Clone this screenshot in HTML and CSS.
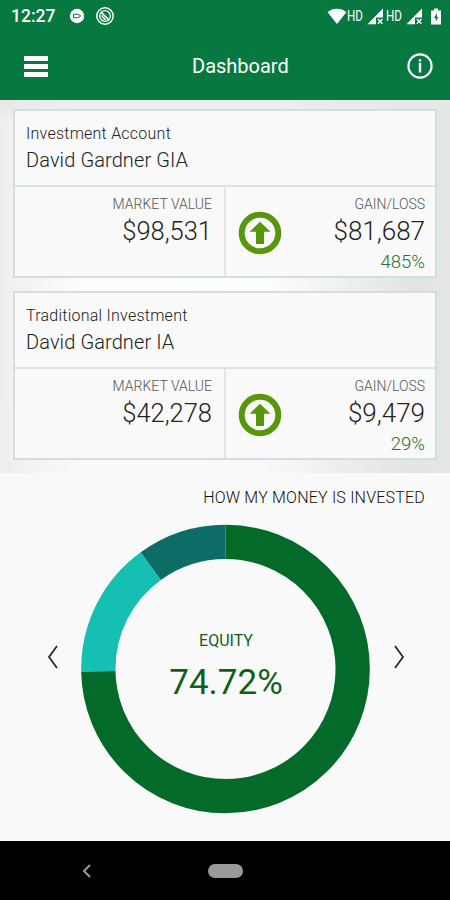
FILE: index.html
```html
<!DOCTYPE html>
<html lang="en">
<head>
  <meta charset="UTF-8">
  <title>Dashboard</title>
  <link rel="stylesheet" href="styles.css">
</head>
<body>
  <header class="header">
    <!-- Phone status bar -->
    <div class="status-bar">
      <span class="clock">12:27</span>
      <svg class="notif-video" width="16" height="16" viewBox="0 0 16 16">
        <circle cx="8" cy="8" r="7.2" fill="#fff"/>
        <path d="M4.5 6.3h4.5l2.8 1.7L9 9.7H4.5z" fill="none" stroke="#07783f" stroke-width="1"/>
      </svg>
      <svg class="notif-call" width="20" height="20" viewBox="0 0 20 20">
        <circle cx="10" cy="10" r="8.2" fill="none" stroke="#fff" stroke-width="1.5"/>
        <circle cx="10" cy="10" r="5.3" fill="none" stroke="#fff" stroke-width="1.3"/>
        <path d="M6.5 6.5l7 7M6.5 9.5l4 4.5" fill="none" stroke="#fff" stroke-width="1.7"/>
      </svg>
      <svg class="wifi" width="20" height="17" viewBox="0 0 20 17">
        <path d="M.6 4.2C5.5-.3 14.5-.3 19.4 4.2L10 16z" fill="#fff"/>
      </svg>
      <span class="hd">HD</span>
      <svg class="signal" width="17" height="17" viewBox="0 0 17 17">
        <path d="M16 .5v9H9v6.7H.5z" fill="#fff"/>
        <path d="M10.8 11l4.6 4.8M15.4 11l-4.6 4.8" stroke="#fff" stroke-width="1.3"/>
      </svg>
      <span class="hd hd-second">HD</span>
      <svg class="signal" width="17" height="17" viewBox="0 0 17 17">
        <path d="M16 .5v9H9v6.7H.5z" fill="#fff"/>
        <path d="M10.8 11l4.6 4.8M15.4 11l-4.6 4.8" stroke="#fff" stroke-width="1.3"/>
      </svg>
      <svg class="battery" width="12" height="17" viewBox="0 0 12 17">
        <path d="M4 .5h4v2h3v14H1v-14h3z" fill="#fff"/>
        <path d="M6.8 5L4 10h1.7v3.8L8.3 9H6.8z" fill="#07783f"/>
      </svg>
    </div>
    <div class="app-bar">
      <div class="menu"><span></span><span></span><span></span></div>
      <h1>Dashboard</h1>
      <svg class="info" width="28" height="28" viewBox="0 0 28 28">
        <circle cx="14" cy="14" r="11.6" fill="none" stroke="#fff" stroke-width="2.1"/>
        <path d="M14 7.3v2.2M14 10.7v9.8" stroke="#fff" stroke-width="2.4"/>
      </svg>
    </div>
  </header>

  <!-- Accounts -->
  <section class="accounts">
    <div class="card">
      <div class="card-head">
        <div class="type">Investment Account</div>
        <div class="name">David Gardner GIA</div>
      </div>
      <div class="card-body">
        <div class="market">
          <div class="label">MARKET VALUE</div>
          <div class="value">$98,531</div>
        </div>
        <div class="gain">
          <svg class="arrow" width="44" height="44" viewBox="0 0 44 44">
            <circle cx="22" cy="22" r="18.3" fill="none" stroke="#58970c" stroke-width="6"/>
            <path d="M22 10.8L32.5 20.8H26V33h-8V20.8h-6.5z" fill="#58970c"/>
          </svg>
          <div class="gain-text">
            <div class="label">GAIN/LOSS</div>
            <div class="value">$81,687</div>
            <div class="percent">485%</div>
          </div>
        </div>
      </div>
    </div>

    <div class="card">
      <div class="card-head">
        <div class="type">Traditional Investment</div>
        <div class="name">David Gardner IA</div>
      </div>
      <div class="card-body">
        <div class="market">
          <div class="label">MARKET VALUE</div>
          <div class="value">$42,278</div>
        </div>
        <div class="gain">
          <svg class="arrow" width="44" height="44" viewBox="0 0 44 44">
            <circle cx="22" cy="22" r="18.3" fill="none" stroke="#58970c" stroke-width="6"/>
            <path d="M22 10.8L32.5 20.8H26V33h-8V20.8h-6.5z" fill="#58970c"/>
          </svg>
          <div class="gain-text">
            <div class="label">GAIN/LOSS</div>
            <div class="value">$9,479</div>
            <div class="percent">29%</div>
          </div>
        </div>
      </div>
    </div>
  </section>

  <!-- Allocation chart -->
  <section class="invested">
    <h2>HOW MY MONEY IS INVESTED</h2>
    <div class="carousel">
      <svg class="chevron" width="14" height="26" viewBox="0 0 14 26">
        <path d="M11 2L3 13l8 11" fill="none" stroke="#222" stroke-width="1.7"/>
      </svg>
      <div class="chart">
        <svg width="290" height="290" viewBox="0 0 290 290">
          <g fill="none" stroke-width="34.3" transform="rotate(-90 144.5 145)">
            <circle cx="144.5" cy="145" r="127.2" pathLength="100" stroke="#046a2a" stroke-dasharray="74.72 100"/>
            <circle cx="144.5" cy="145" r="127.2" pathLength="100" stroke="#15bfb1" stroke-dasharray="15.28 100" stroke-dashoffset="-74.72"/>
            <circle cx="144.5" cy="145" r="127.2" pathLength="100" stroke="#0d6d66" stroke-dasharray="10 100" stroke-dashoffset="-90"/>
          </g>
        </svg>
        <div class="chart-label">
          <div class="asset">EQUITY</div>
          <div class="share">74.72%</div>
        </div>
      </div>
      <svg class="chevron" width="14" height="26" viewBox="0 0 14 26">
        <path d="M3 2l8 11-8 11" fill="none" stroke="#222" stroke-width="1.7"/>
      </svg>
    </div>
  </section>

  <!-- System navigation -->
  <footer class="nav-bar">
    <svg class="back" width="10" height="16" viewBox="0 0 10 16">
      <path d="M8 2L2 8l6 6" fill="none" stroke="#999" stroke-width="2"/>
    </svg>
    <span class="home"></span>
  </footer>
</body>
</html>
```
FILE: styles.css
```css
* {
  box-sizing: border-box;
}
body {
  margin: 0;
  width: 450px;
  height: 900px;
  overflow: hidden;
  display: flex;
  flex-direction: column;
  font-family: Roboto, sans-serif;
  background: #f9f9f9;
  color: #222;
}
svg {
  display: block;
  flex: none;
}
.header {
  height: 100px;
  background: #07783f;
  color: #fff;
}
.status-bar {
  height: 32px;
  display: flex;
  align-items: center;
  padding: 0 8px 0 11px;
}
.clock {
  width: 45px;
  font-size: 17.5px;
  font-weight: 500;
}
.notif-video {
  margin-left: 13px;
}
.notif-call {
  margin-left: 10px;
}
.wifi {
  margin-left: auto;
}
.hd {
  width: 18px;
  font-size: 14px;
  line-height: 16px;
  transform: scaleX(0.83);
  transform-origin: left;
}
.signal {
  margin-left: 2px;
}
.hd-second {
  margin-left: 2px;
}
.battery {
  margin-left: 7px;
}
.app-bar {
  height: 68px;
  display: flex;
  align-items: center;
  padding: 0 16px 0 24px;
}
.menu {
  width: 28px;
  display: flex;
  flex-direction: column;
  gap: 3px;
}
.menu span {
  width: 24px;
  height: 5px;
  background: #fff;
}
h1 {
  margin: 0 0 0 140px;
  font-size: 20px;
  font-weight: 400;
}
.info {
  margin-left: auto;
}

/* Accounts */
.accounts {
  height: 373px;
  padding: 9px 13px;
  display: flex;
  flex-direction: column;
  gap: 13px;
  background:
    linear-gradient(to bottom, #e8e8e8, rgba(232, 232, 232, 0) 6%),
    linear-gradient(160deg, rgba(228, 229, 229, 0) 55%, rgba(228, 229, 229, 0.3) 100%),
    linear-gradient(to right, #eeeeee 0%, #fdfdfd 18%, #fefefe 58%, #e2e4e4 92%, #e4e5e5 100%);
}
.card {
  height: 169px;
  border: 2px solid #d0dfe2;
  background: #f9f9f9;
}
.card-head {
  height: 76px;
  padding: 12px 11px 0;
  border-bottom: 2px solid #dbe3e5;
}
.type {
  font-size: 16px;
  line-height: 22px;
  letter-spacing: 0.24px;
  font-weight: 300;
}
.name {
  margin-top: 1px;
  font-size: 20px;
  line-height: 28px;
  letter-spacing: 0.1px;
  font-weight: 300;
}
.card-body {
  height: 89px;
  display: flex;
}
.market {
  width: 211px;
  padding: 8px 12px 0;
  border-right: 2px solid #e0e8ea;
  text-align: right;
}
.gain {
  flex: 1;
  display: flex;
  justify-content: space-between;
  padding: 8px 10px 0 12px;
}
.arrow {
  margin-top: 16px;
}
.gain-text {
  text-align: right;
}
.label {
  font-size: 14px;
  line-height: 18px;
  font-weight: 300;
  color: #555;
}
.value {
  font-size: 25.5px;
  line-height: 36px;
  font-weight: 300;
}
.gain .value {
  font-size: 26px;
}
.percent {
  margin-top: 1px;
  font-size: 18.5px;
  line-height: 24px;
  font-weight: 300;
  color: #2a732d;
}

/* Allocation chart */
.invested {
  height: 368px;
}
h2 {
  margin: 0;
  padding: 15px 25px 0 0;
  font-size: 16px;
  line-height: 20px;
  letter-spacing: 0.2px;
  font-weight: 300;
  text-align: right;
  color: #111;
}
.carousel {
  margin-top: 16px;
  display: flex;
  align-items: center;
  padding-left: 46px;
}
.carousel .chevron {
  position: relative;
  top: -12px;
}
.chart {
  position: relative;
  width: 290px;
  height: 290px;
  margin: 0 21px;
}
/* Sits over the hole of the ring */
.chart-label {
  position: absolute;
  inset: 105px 0 0;
  text-align: center;
  color: #0f6119;
}
.asset {
  font-size: 16px;
  line-height: 24px;
  font-weight: 400;
}
.share {
  margin-top: 8px;
  font-size: 35px;
  line-height: 44px;
}

/* System navigation */
.nav-bar {
  flex: 1;
  display: flex;
  align-items: center;
  padding-left: 82px;
  background: #000;
}
.home {
  width: 35px;
  height: 14px;
  margin-left: 116px;
  border-radius: 7px;
  background: #9a9a9a;
}
```
